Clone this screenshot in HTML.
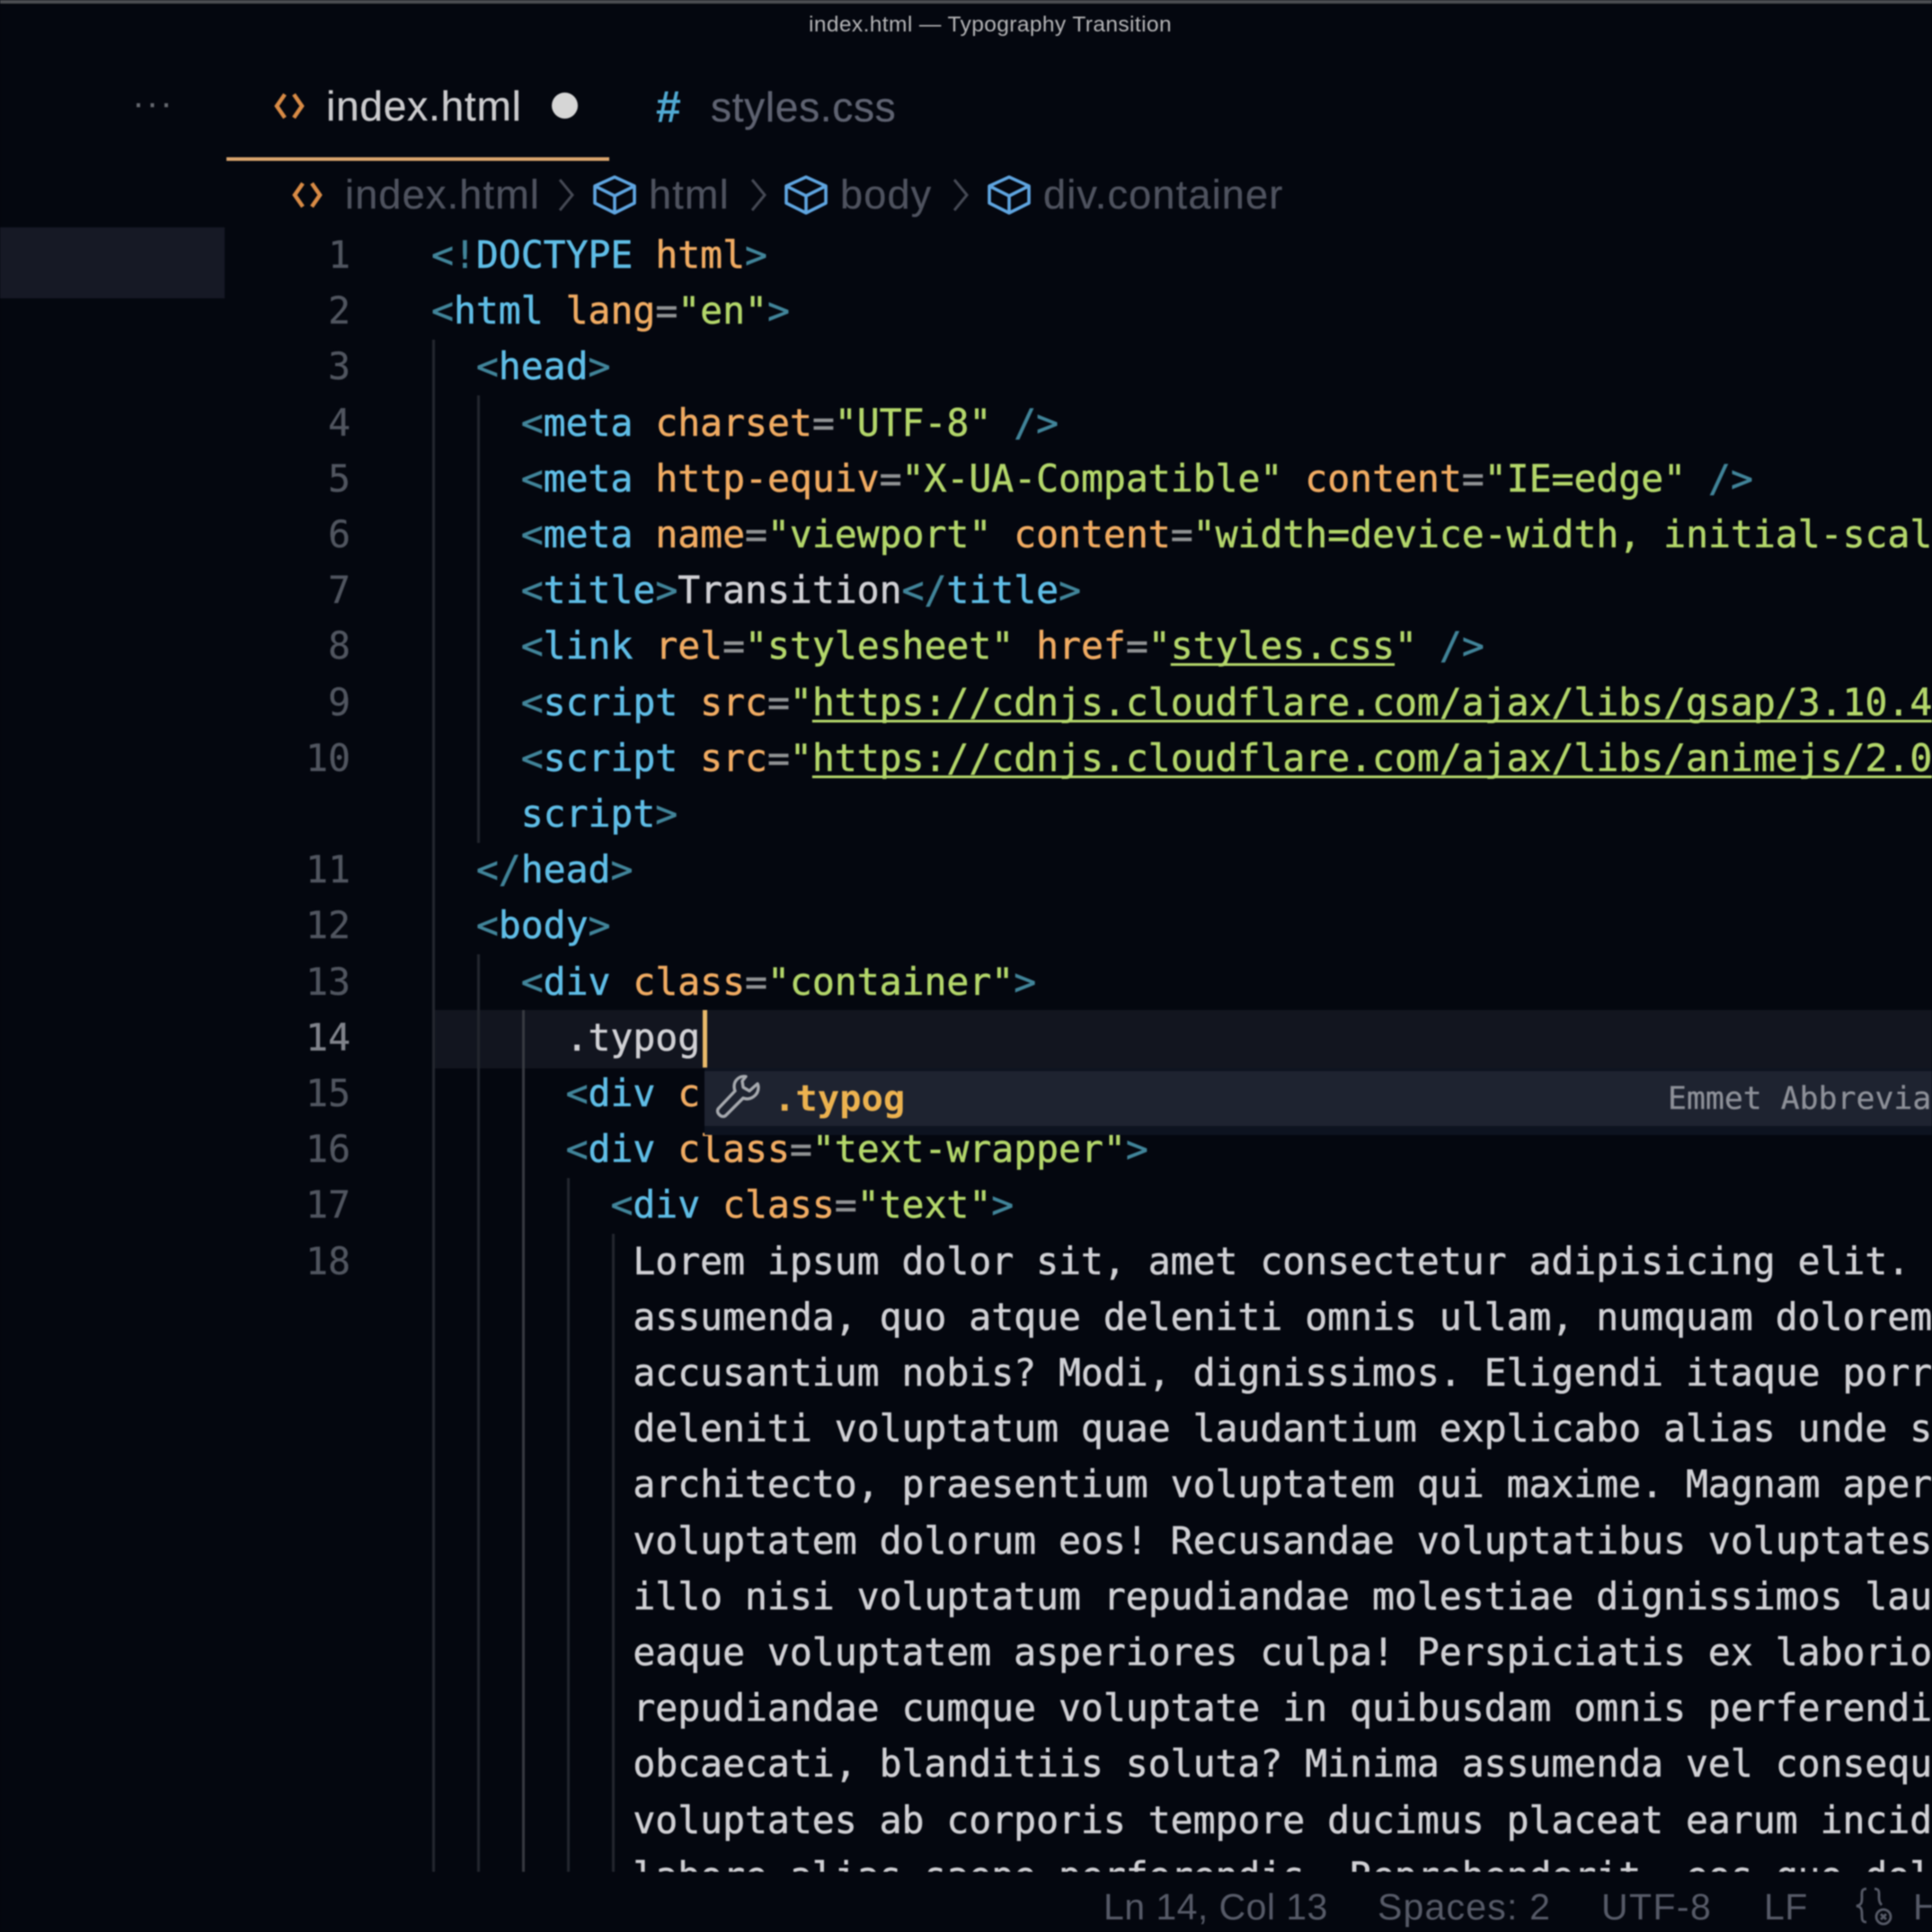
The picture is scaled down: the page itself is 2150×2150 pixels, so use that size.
<!DOCTYPE html>
<html><head><meta charset="utf-8"><style>
html,body{margin:0;padding:0;background:#04070f}
#r{position:relative;width:2150px;height:2150px;overflow:hidden;background:#04070f;filter:blur(.7px);font-family:"Liberation Sans",sans-serif}
.a{position:absolute;white-space:pre;line-height:1}
pre{margin:0;font-family:"DejaVu Sans Mono","Liberation Mono",monospace;font-size:41.42px;line-height:62.2px}
#code{position:absolute;left:480px;top:253px;color:#d0d0d4;-webkit-text-stroke:.5px currentColor}
#nums{position:absolute;left:300px;top:253px;width:90px;text-align:right;color:#50555f;-webkit-text-stroke:.3px currentColor}
.b{color:#418499}.t{color:#5fbde6}.k{color:#f0ab62}.e{color:#8f9193}.s{color:#b3d66a}
.u{text-decoration:underline;text-decoration-thickness:3px;text-underline-offset:5px;text-decoration-skip-ink:none}
.g{position:absolute;width:3px;background:#23262e}
.bc{color:#4e525e;font-size:45px;top:194px;letter-spacing:1.2px;-webkit-text-stroke:.3px currentColor}
.st{color:#565a67;font-size:41px;top:2102px;letter-spacing:.45px}
svg{position:absolute;overflow:visible}
</style></head><body><div id="r">
<div class="a" style="left:0;top:0;width:2150px;height:4px;background:#4c4e52"></div>
<div class="a" style="left:900px;top:16px;font-size:24.5px;color:#b4b4b6;letter-spacing:.4px">index.html — Typography Transition</div>

<div class="a" style="left:0;top:253px;width:250px;height:79px;background:#161925"></div>
<div class="a" style="left:148px;top:97px;font-size:36px;color:#666970;letter-spacing:3.500px;-webkit-text-stroke:.5px currentColor">···</div>

<svg style="left:304px;top:102px" width="36" height="32" fill="none" stroke="#d98b45" stroke-width="4.5"><path d="M13 3 L4 16 L13 29M23 3 L32 16 L23 29"/></svg>
<div class="a" style="left:363px;top:95px;font-size:46px;color:#cbcbcd;letter-spacing:.8px;-webkit-text-stroke:.3px currentColor">index.html</div>
<div class="a" style="left:614px;top:103px;width:29px;height:29px;border-radius:50%;background:#d6d6d6"></div>
<div class="a" style="left:730px;top:94px;font-size:50px;font-weight:bold;color:#50a9d2">#</div>
<div class="a" style="left:791px;top:96px;font-size:46px;color:#5e6270;letter-spacing:.7px;-webkit-text-stroke:.3px currentColor">styles.css</div>
<div class="a" style="left:252px;top:175px;width:426px;height:4px;background:#dba56d"></div>

<svg style="left:324px;top:201px" width="36" height="32" fill="none" stroke="#d98b45" stroke-width="4.5"><path d="M13 3 L4 16 L13 29M23 3 L32 16 L23 29"/></svg>
<div class="a bc" style="left:384px">index.html</div>
<svg style="left:620px;top:198px" width="20" height="38" fill="none" stroke="#454954" stroke-width="3"><path d="M3 2 L17 19 L3 36"/></svg>
<svg style="left:660px;top:195px" width="48" height="44" fill="none" stroke="#5fa5e0" stroke-width="3.6" stroke-linejoin="round"><path d="M24 2 L46 12 V31 L24 42 L2 31 V12 Z M2 12 L24 23 L46 12 M24 23 V42"/></svg>
<div class="a bc" style="left:722px">html</div>
<svg style="left:834px;top:198px" width="20" height="38" fill="none" stroke="#454954" stroke-width="3"><path d="M3 2 L17 19 L3 36"/></svg>
<svg style="left:873px;top:195px" width="48" height="44" fill="none" stroke="#5fa5e0" stroke-width="3.6" stroke-linejoin="round"><path d="M24 2 L46 12 V31 L24 42 L2 31 V12 Z M2 12 L24 23 L46 12 M24 23 V42"/></svg>
<div class="a bc" style="left:935px">body</div>
<svg style="left:1059px;top:198px" width="20" height="38" fill="none" stroke="#454954" stroke-width="3"><path d="M3 2 L17 19 L3 36"/></svg>
<svg style="left:1099px;top:195px" width="48" height="44" fill="none" stroke="#5fa5e0" stroke-width="3.6" stroke-linejoin="round"><path d="M24 2 L46 12 V31 L24 42 L2 31 V12 Z M2 12 L24 23 L46 12 M24 23 V42"/></svg>
<div class="a bc" style="left:935px;visibility:hidden"></div>
<div class="a bc" style="left:1161px">div.container</div>

<div style="position:absolute;left:0;top:253px;width:2150px;height:1830px;overflow:hidden">
<div class="a" style="left:484px;top:871px;width:1666px;height:65px;background:#12151f"></div>
<div class="g" style="left:481px;top:125px;height:1705px"></div>
<div class="g" style="left:531px;top:187px;height:498px"></div>
<div class="g" style="left:531px;top:809px;height:1021px"></div>
<div class="g" style="left:581px;top:871px;height:959px;background:#363940"></div>
<div class="g" style="left:631px;top:1058px;height:772px"></div>
<div class="g" style="left:681px;top:1120px;height:710px"></div>
<pre id="nums" style="top:0">1
2
3
4
5
6
7
8
9
10

11
12
13
<span style="color:#7f828a">14</span>
15
16
17
18</pre>
<pre id="code" style="top:0"><span class="b">&lt;!</span><span class="t">DOCTYPE</span> <span class="k">html</span><span class="b">&gt;</span>
<span class="b">&lt;</span><span class="t">html</span> <span class="k">lang</span><span class="e">=</span><span class="s">"en"</span><span class="b">&gt;</span>
  <span class="b">&lt;</span><span class="t">head</span><span class="b">&gt;</span>
    <span class="b">&lt;</span><span class="t">meta</span> <span class="k">charset</span><span class="e">=</span><span class="s">"UTF-8"</span> <span class="b">/&gt;</span>
    <span class="b">&lt;</span><span class="t">meta</span> <span class="k">http-equiv</span><span class="e">=</span><span class="s">"X-UA-Compatible"</span> <span class="k">content</span><span class="e">=</span><span class="s">"IE=edge"</span> <span class="b">/&gt;</span>
    <span class="b">&lt;</span><span class="t">meta</span> <span class="k">name</span><span class="e">=</span><span class="s">"viewport"</span> <span class="k">content</span><span class="e">=</span><span class="s">"width=device-width, initial-scale=1.0"</span> <span class="b">/&gt;</span>
    <span class="b">&lt;</span><span class="t">title</span><span class="b">&gt;</span>Transition<span class="b">&lt;/</span><span class="t">title</span><span class="b">&gt;</span>
    <span class="b">&lt;</span><span class="t">link</span> <span class="k">rel</span><span class="e">=</span><span class="s">"stylesheet"</span> <span class="k">href</span><span class="e">=</span><span class="s">"<span class="u">styles.css</span>"</span> <span class="b">/&gt;</span>
    <span class="b">&lt;</span><span class="t">script</span> <span class="k">src</span><span class="e">=</span><span class="s">"<span class="u">https://cdnjs.cloudflare.com/ajax/libs/gsap/3.10.4/gsap.min.js</span>"</span>
    <span class="b">&lt;</span><span class="t">script</span> <span class="k">src</span><span class="e">=</span><span class="s">"<span class="u">https://cdnjs.cloudflare.com/ajax/libs/animejs/2.0.2/anime.min.js</span>"</span>
    <span class="t">script</span><span class="b">&gt;</span>
  <span class="b">&lt;/</span><span class="t">head</span><span class="b">&gt;</span>
  <span class="b">&lt;</span><span class="t">body</span><span class="b">&gt;</span>
    <span class="b">&lt;</span><span class="t">div</span> <span class="k">class</span><span class="e">=</span><span class="s">"container"</span><span class="b">&gt;</span>
      .typog
      <span class="b">&lt;</span><span class="t">div</span> <span class="k">c</span>
      <span class="b">&lt;</span><span class="t">div</span> <span class="k">class</span><span class="e">=</span><span class="s">"text-wrapper"</span><span class="b">&gt;</span>
        <span class="b">&lt;</span><span class="t">div</span> <span class="k">class</span><span class="e">=</span><span class="s">"text"</span><span class="b">&gt;</span>
         Lorem ipsum dolor sit, amet consectetur adipisicing elit.
         assumenda, quo atque deleniti omnis ullam, numquam dolorem
         accusantium nobis? Modi, dignissimos. Eligendi itaque porro
         deleniti voluptatum quae laudantium explicabo alias unde s
         architecto, praesentium voluptatem qui maxime. Magnam aper
         voluptatem dolorum eos! Recusandae voluptatibus voluptates
         illo nisi voluptatum repudiandae molestiae dignissimos lau
         eaque voluptatem asperiores culpa! Perspiciatis ex laborio
         repudiandae cumque voluptate in quibusdam omnis perferendi
         obcaecati, blanditiis soluta? Minima assumenda vel consequ
         voluptates ab corporis tempore ducimus placeat earum incid
         labore alias saepe perferendis. Reprehenderit, eos quo dol</pre>
<div class="a" style="left:782px;top:871px;width:5px;height:64px;background:#e8b96a"></div>
<div class="a" style="left:784px;top:936px;width:1366px;height:74px;background:#0d1320"></div>
<div class="a" style="left:784px;top:939px;width:1366px;height:61px;background:#1e2330"></div>
<svg style="left:797px;top:942px" width="50" height="50" fill="none" stroke="#a6a9ae" stroke-width="3.4" stroke-linejoin="round"><path d="M33 3 C26 2 20 7 20 14 C20 16 20.500 18 21 19 L3 38 C1 40 1 43 3.500 45.500 C6 48 9 48 11 46 L30 27 C38 30 47 24 47 15 C47 13 46.500 12 46 11 L37 19 L30 15 L29 8 Z"/></svg>
</div>
<pre class="a" style="left:861px;top:1191px;font-size:40.5px;font-weight:bold;color:#ecb24f;line-height:62px">.typog</pre>
<pre class="a" style="left:1856px;top:1192px;font-size:34.8px;color:#8d9098;line-height:62px;-webkit-text-stroke:.3px currentColor">Emmet Abbreviation</pre>

<div class="a st" style="left:1228px">Ln 14, Col 13</div>
<div class="a st" style="left:1533px;letter-spacing:1.2px">Spaces: 2</div>
<div class="a st" style="left:1782px;letter-spacing:1.4px">UTF-8</div>
<div class="a st" style="left:1963px">LF</div>
<svg style="left:2064px;top:2100px" width="46" height="46" fill="none" stroke="#565a67" stroke-width="2.800"><path d="M13 2 C7 2 8 6 8 12 C8 18 7 20 2 21 C7 22 8 24 8 30 C8 36 8 39 13 39M22 2 C28 2 27 6 27 12 C27 16 28 18 30 20"/><circle cx="32" cy="33" r="8"/><path d="M29 30 L35 36M35 30 L29 36"/></svg>
<div class="a st" style="left:2129px">H</div>
</div></body></html>
